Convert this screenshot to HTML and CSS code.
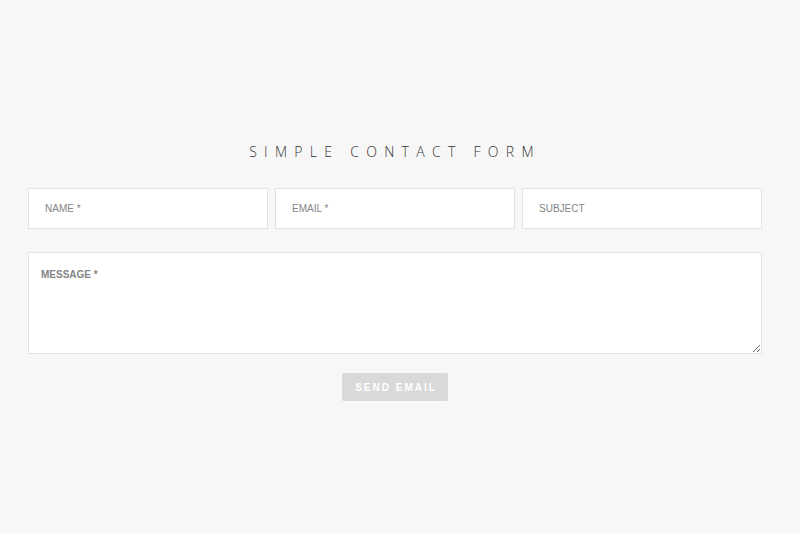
FILE: index.html
```html
<!DOCTYPE html>
<html>
<head>
<meta charset="utf-8">
<link rel="stylesheet" href="styles.css">
</head>
<body>
<main class="page">
  <form class="contact">
    <h1 class="title">SIMPLE CONTACT FORM</h1>
    <div class="row">
      <input class="field" type="text" placeholder="NAME *">
      <input class="field" type="email" placeholder="EMAIL *">
      <input class="field" type="text" placeholder="SUBJECT">
    </div>
    <textarea class="message" placeholder="MESSAGE *"></textarea>
    <div class="actions">
      <button class="send" type="button">SEND EMAIL</button>
    </div>
  </form>
</main>
</body>
</html>
```

FILE: styles.css
```css
html, body {
  margin: 0;
  padding: 0;
  background: #f7f7f7;
  height: 100%;
}
.page {
  padding: 140px 38px 0 28px;
}
.contact {
  display: flex;
  flex-direction: column;
}
.title {
  margin: 0 0 24px 0;
  text-align: center;
  font-family: "Open Sans", sans-serif;
  font-weight: 300;
  font-size: 14px;
  line-height: 24px;
  letter-spacing: 7.3px;
  color: #333;
  padding-left: 0;
}
.row {
  display: grid;
  grid-template-columns: 1fr 1fr 1fr;
  column-gap: 7px;
  margin-bottom: 23px;
}
.field {
  box-sizing: border-box;
  height: 41px;
  border: 1px solid #e3e3e3;
  background: #fff;
  padding: 0 16px;
  font-family: "Liberation Sans", Arial, sans-serif;
  font-size: 10px;
  color: #555;
  outline: none;
  margin: 0;
  min-width: 0;
}
.field::placeholder {
  color: #858585;
}
.message {
  box-sizing: border-box;
  height: 102px;
  border: 1px solid #e3e3e3;
  background: #fff;
  padding: 16px 12px;
  font-family: "Liberation Sans", Arial, sans-serif;
  font-size: 10px;
  font-weight: bold;
  color: #555;
  outline: none;
  margin: 0 0 19px 0;
  resize: vertical;
}
.message::placeholder {
  color: #858585;
}
.actions {
  display: flex;
  justify-content: center;
}
.send {
  width: 106px;
  height: 28px;
  border: none;
  border-radius: 2px;
  background: #d9d9d9;
  color: #fff;
  font-family: "Liberation Sans", Arial, sans-serif;
  font-weight: bold;
  font-size: 10px;
  letter-spacing: 2px;
  padding: 0 0 0 2px;
}
```
